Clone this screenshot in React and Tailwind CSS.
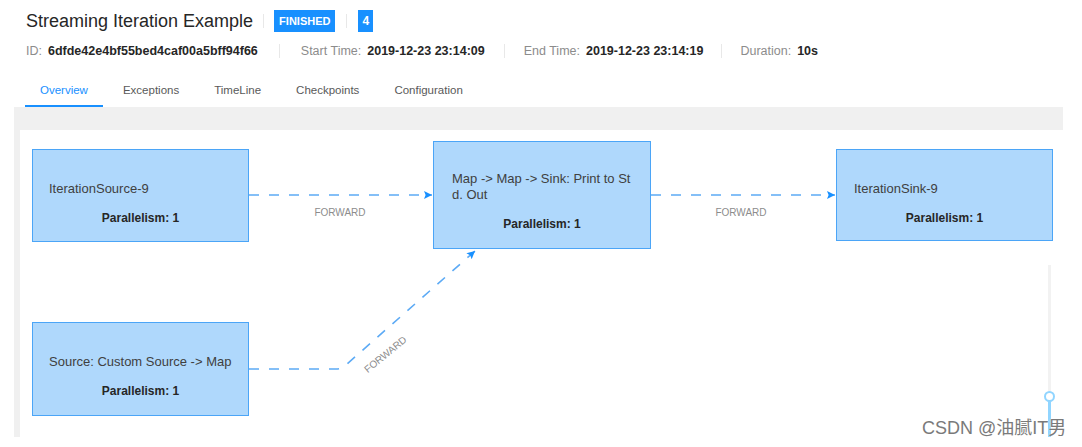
import React from 'react';

const font = { fontFamily: '"Liberation Sans", Arial, "Noto Sans CJK SC", sans-serif' };

const tabs = ['Overview', 'Exceptions', 'TimeLine', 'Checkpoints', 'Configuration'];

const nodes = [
  { id: 'src9', left: 'left-[12px] top-[19px] w-[217px] h-[93px]', pad: 'pt-[31px] px-[16px]', lines: ['IterationSource-9'] },
  { id: 'map', left: 'left-[413px] top-[11px] w-[218px] h-[108px]', pad: 'pt-[29px] px-[18px]', lines: ['Map -> Map -> Sink: Print to St', 'd. Out'] },
  { id: 'sink9', left: 'left-[816px] top-[19px] w-[217px] h-[92px]', pad: 'pt-[31px] px-[17px]', lines: ['IterationSink-9'] },
  { id: 'custom', left: 'left-[12px] top-[192px] w-[217px] h-[94px]', pad: 'pt-[31px] px-[16px]', lines: ['Source: Custom Source -> Map'] },
];

const Separator = ({ className = '' }) => <span className={`w-px h-[14px] bg-[#e8e8e8] ${className}`} />;

const MetaItem = ({ label, value }) => (
  <span className="flex items-center">
    <span className="text-[#8c8c8c]">{label}</span>
    <span className="ml-[6px] font-bold text-[#262626]">{value}</span>
  </span>
);

export default function App() {
  return (
    <div className="relative w-[1082px] h-[447px] bg-white overflow-hidden" style={font}>
      {/* header */}
      <div className="pl-[26px] pt-[10px]">
        <div className="flex items-center h-[22px]">
          <h1 className="text-[18px] leading-[22px] text-[#262626]">Streaming Iteration Example</h1>
          <Separator className="mx-[10px]" />
          <span className="bg-[#1890ff] text-white text-[11px] font-bold leading-[22px] px-[5px]">FINISHED</span>
          <Separator className="mx-[11px]" />
          <span className="bg-[#1890ff] text-white text-[12px] font-bold leading-[22px] px-[4px]">4</span>
        </div>
        <div className="flex items-center mt-[10px] h-[18px] text-[12.5px]">
          <MetaItem label="ID:" value="6dfde42e4bf55bed4caf00a5bff94f66" />
          <Separator className="mx-[21px]" />
          <MetaItem label="Start Time:" value="2019-12-23 23:14:09" />
          <Separator className="mx-[19px]" />
          <MetaItem label="End Time:" value="2019-12-23 23:14:19" />
          <Separator className="mx-[18px]" />
          <MetaItem label="Duration:" value="10s" />
        </div>
      </div>

      {/* tabs */}
      <div className="flex gap-[5px] pl-[25px] mt-[13px]">
        {tabs.map((t, i) => (
          <div
            key={t}
            className={`px-[15px] pt-[8px] pb-[6px] text-[11.5px] leading-[18px] border-b-2 ${
              i === 0 ? 'text-[#1890ff] border-[#1890ff]' : 'text-[#595959] border-transparent'
            }`}
          >
            {t}
          </div>
        ))}
      </div>

      {/* graph panel */}
      <div className="ml-[14px] w-[1049px] h-[330px] bg-[#f0f0f0] pt-[23px] pl-[6px]">
        <div className="relative w-[1043px] h-[307px] bg-white">
          <svg className="absolute inset-0" width="1043" height="307">
            <defs>
              <marker id="arrow" viewBox="0 0 10 10" refX="10" refY="5" markerWidth="10" markerHeight="8" markerUnits="userSpaceOnUse" orient="auto">
                <path d="M0,0 L10,5 L0,10 L2,5 z" fill="#1890ff" />
              </marker>
            </defs>
            <g fill="none" stroke="#5caaf5" strokeWidth="1.6" strokeDasharray="10 10">
              <path d="M229,65 L412,65" markerEnd="url(#arrow)" />
              <path d="M631,65 L815,65" markerEnd="url(#arrow)" />
              <path d="M229,239 L316,239 Q322,239 327,234 L455,121" markerEnd="url(#arrow)" />
            </g>
            <g fill="#8c8c8c" fontSize="10" fontFamily="Liberation Sans, Arial, sans-serif" textAnchor="middle">
              <text x="320" y="86">FORWARD</text>
              <text x="721" y="86">FORWARD</text>
              <text x="365" y="228" transform="rotate(-39 365 224)">FORWARD</text>
            </g>
          </svg>

          {nodes.map((n) => (
            <div key={n.id} className={`absolute ${n.left} bg-[#afd8fc] border-[1.5px] border-[#4ba5f7] ${n.pad}`}>
              <div className="text-[13px] leading-[16px] text-[#404040] whitespace-nowrap">
                {n.lines.map((l) => (
                  <div key={l}>{l}</div>
                ))}
              </div>
              <div className="mt-[12px] text-center text-[12px] leading-[18px] font-bold text-[#262626]">Parallelism: 1</div>
            </div>
          ))}

          {/* zoom slider */}
          <div className="absolute left-[1028px] top-[135px] w-[3px] h-[172px] bg-[#f2f2f2]">
            <div className="absolute left-0 top-[131px] w-[3px] h-[41px] bg-[#91d5ff]" />
            <div className="absolute left-[-4px] top-[126px] w-[11px] h-[11px] rounded-full bg-white border-2 border-[#91d5ff]" />
          </div>
        </div>
      </div>

      {/* watermark */}
      <div
        className="absolute left-[922px] top-[418px] text-[18px] leading-[20px] text-[#7a7a7a] whitespace-nowrap"
        style={{ fontFamily: '"Liberation Sans", Arial, "Noto Sans CJK SC", sans-serif', textShadow: '0 0 2px #fff' }}
      >
        CSDN @油腻IT男
      </div>
    </div>
  );
}
